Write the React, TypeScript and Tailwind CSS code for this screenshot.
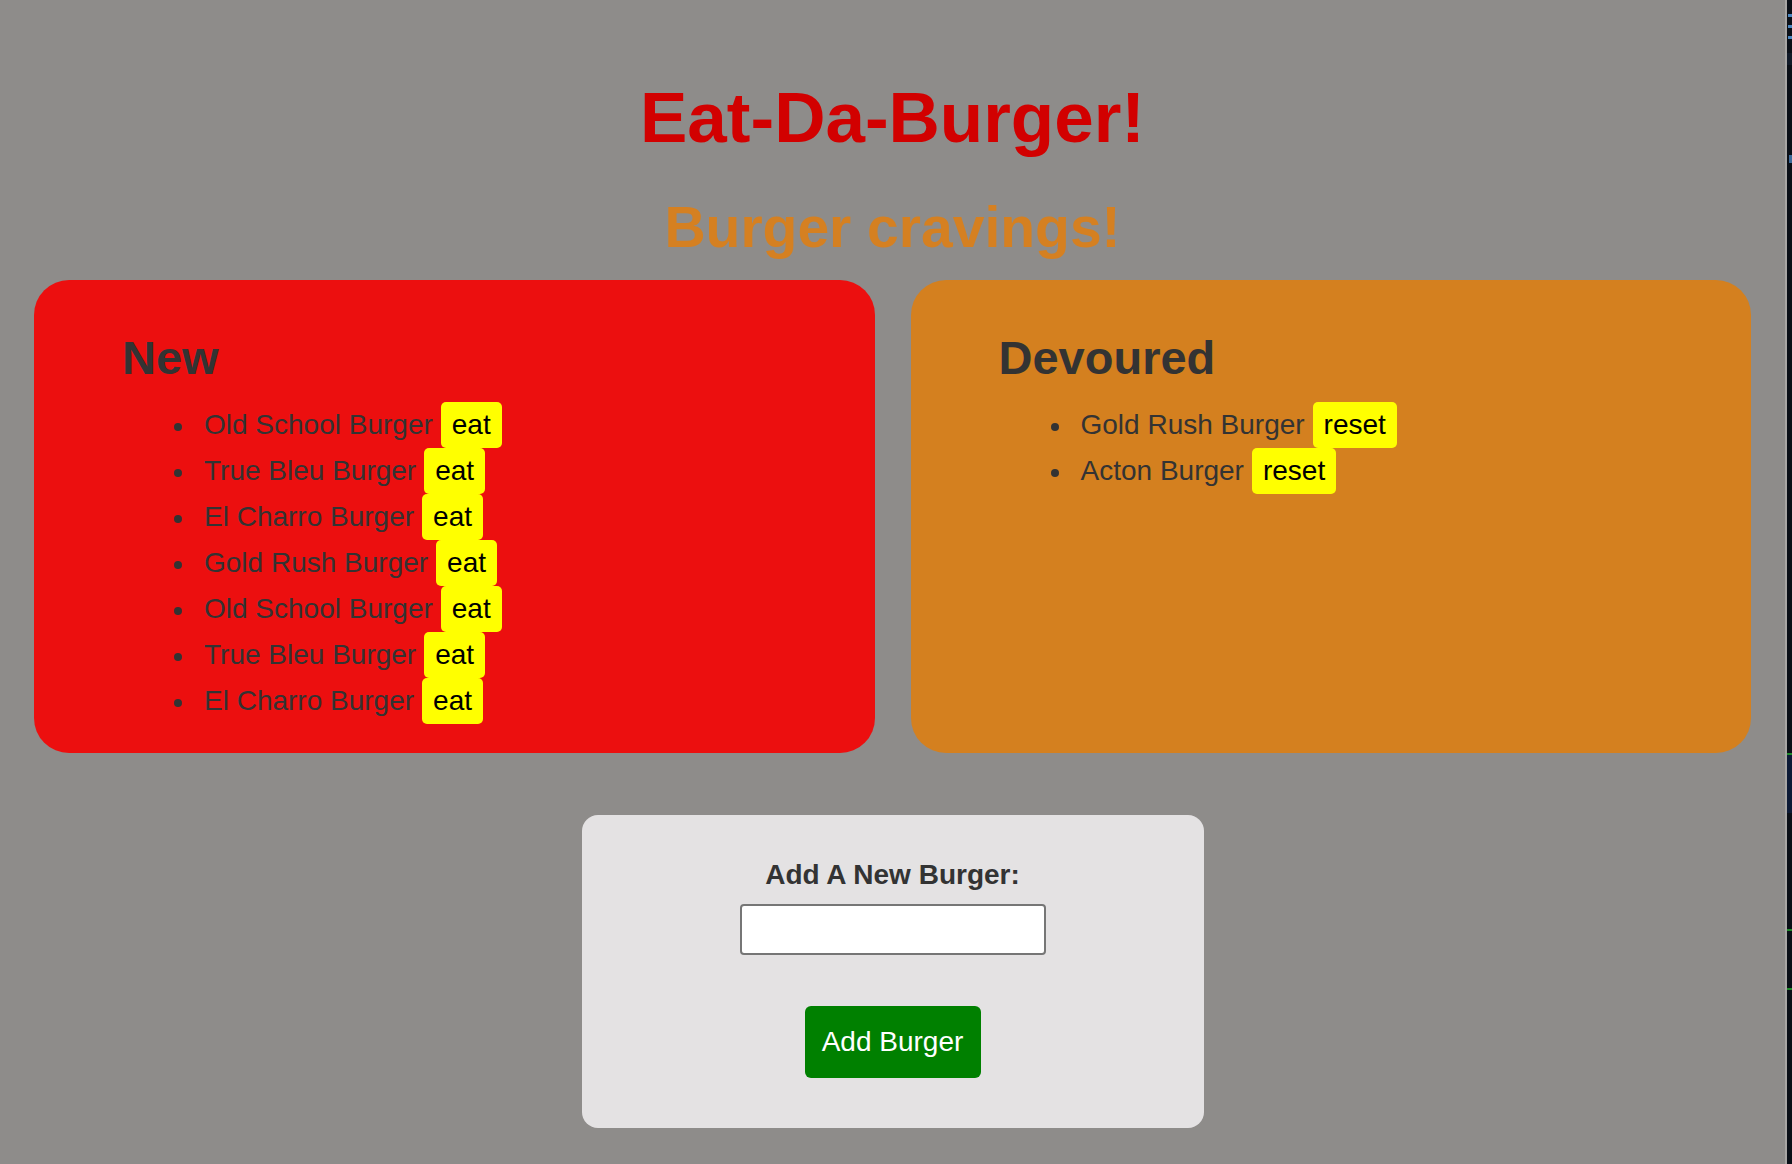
import React from "react";

const newBurgers = [
  "Old School Burger",
  "True Bleu Burger",
  "El Charro Burger",
  "Gold Rush Burger",
  "Old School Burger",
  "True Bleu Burger",
  "El Charro Burger",
];

const devoured = ["Gold Rush Burger", "Acton Burger"];

function Item({ name, label }: { name: string; label: string }) {
  return (
    <li className="text-[28px] leading-[46px] text-[#333333] whitespace-nowrap">
      <span className="inline-block w-[8px] h-[8px] rounded-full bg-[#333333] align-middle ml-[52px] mr-[22px]" />
      <span>{name}</span>
      <button className="inline-block ml-[8px] px-[11px] h-[46px] leading-[46px] rounded-[5px] bg-[#ffff00] text-black text-[28px] align-baseline">
        {label}
      </button>
    </li>
  );
}

export default function App() {
  return (
    <div
      className="flex w-full min-h-[1164px] bg-[#8e8c8a]"
      style={{ fontFamily: '"Liberation Sans", Arial, Helvetica, sans-serif' }}
    >
      <div className="flex-1 flex flex-col items-center pt-[82px] px-[34px]">
        <h1 className="text-[71px] leading-[71px] font-bold text-[#d20000]">
          Eat-Da-Burger!
        </h1>
        <h2 className="mt-[46px] text-[57px] leading-[57px] font-bold text-[#d58021]">
          Burger cravings!
        </h2>
        <div className="mt-[24px] w-full grid grid-cols-2 gap-[36px]">
          <div className="bg-[#ec0f0f] rounded-[35px] pt-[55px] pb-[29px] pl-[88px]">
            <h3 className="text-[47px] leading-[46px] font-bold text-[#333333]">New</h3>
            <ul className="mt-[21px]">
              {newBurgers.map((b, i) => (
                <Item key={i} name={b} label="eat" />
              ))}
            </ul>
          </div>
          <div className="bg-[#d4801f] rounded-[35px] pt-[55px] pb-[29px] pl-[88px]">
            <h3 className="text-[47px] leading-[46px] font-bold text-[#333333]">Devoured</h3>
            <ul className="mt-[21px]">
              {devoured.map((b, i) => (
                <Item key={i} name={b} label="reset" />
              ))}
            </ul>
          </div>
        </div>
        <div className="mt-[62px] w-[622px] h-[313px] bg-[#e4e2e3] rounded-[16px] flex flex-col items-center pt-[44px]">
          <label className="text-[28px] leading-[31px] font-bold text-[#333333]">
            Add A New Burger:
          </label>
          <input
            type="text"
            className="mt-[14px] w-[306px] h-[51px] bg-white border-2 border-[#767676] rounded-[4px]"
          />
          <button className="mt-[51px] w-[176px] h-[72px] bg-[#008000] text-white text-[28px] rounded-[6px]">
            Add Burger
          </button>
        </div>
      </div>
      <div className="w-[2px] bg-[#a8a6a4]" />
      <div className="w-[5px] bg-[#0a0f17] flex flex-col">
        <div className="mt-[14px] w-[4px] h-[3px] bg-[#4a86c0] ml-[1px]" />
        <div className="mt-[8px] w-[4px] h-[3px] bg-[#4a86c0] ml-[1px]" />
        <div className="mt-[8px] w-[4px] h-[3px] bg-[#4a86c0] ml-[1px]" />
        <div className="mt-[14px] w-[5px] h-[12px] bg-[#111a28]" />
        <div className="mt-[90px] w-[3px] h-[8px] bg-[#3d6a9a] ml-[2px]" />
        <div className="mt-[590px] w-[5px] h-[2px] bg-[#1e8a2a]" />
        <div className="w-[5px] h-[58px] bg-[#0c1a36]" />
        <div className="mt-[116px] w-[5px] h-[2px] bg-[#1e8a2a]" />
        <div className="mt-[57px] w-[5px] h-[2px] bg-[#1e8a2a]" />
      </div>
    </div>
  );
}
